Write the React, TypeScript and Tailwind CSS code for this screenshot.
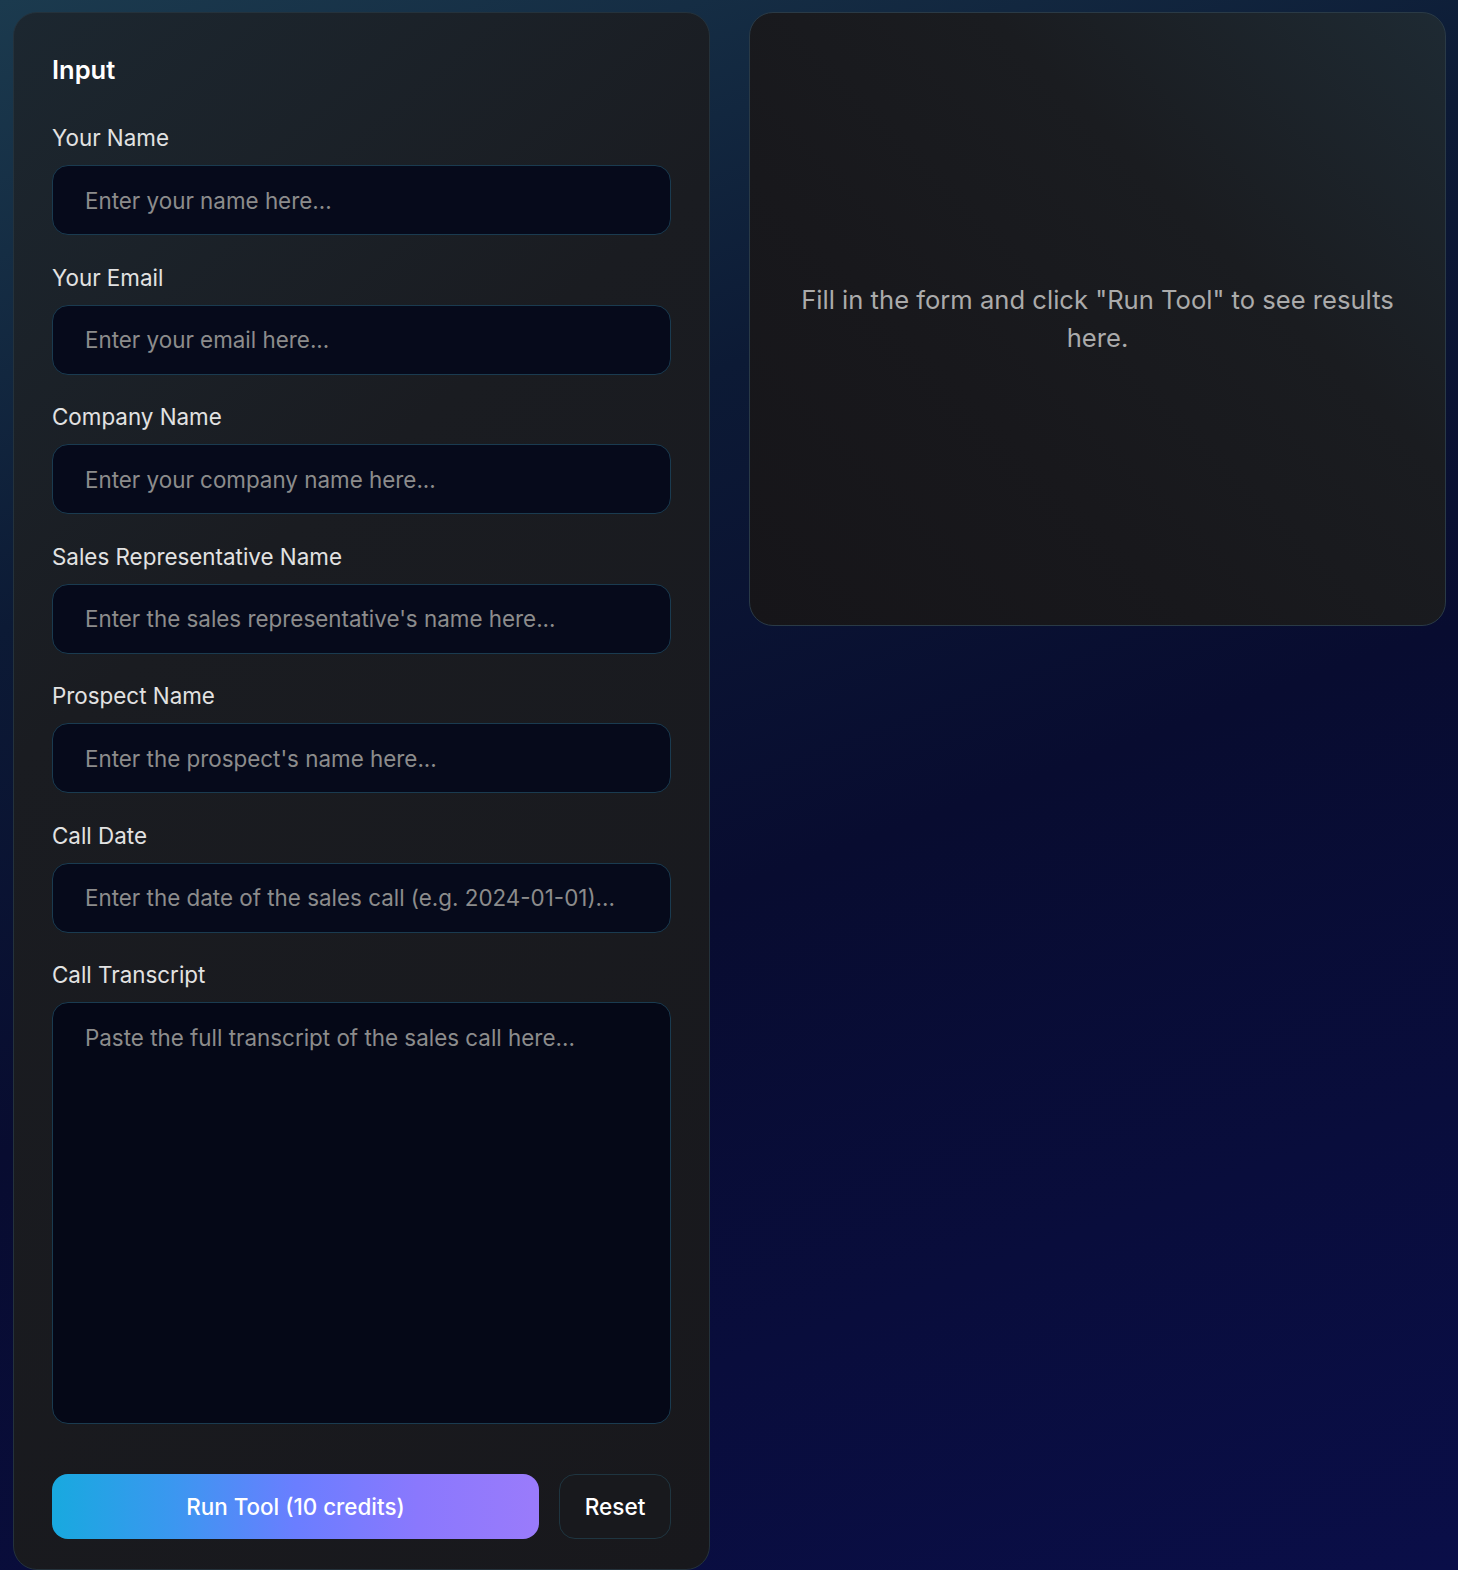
import React from "react";

const fields = [
  { label: "Your Name", ph: "Enter your name here..." },
  { label: "Your Email", ph: "Enter your email here..." },
  { label: "Company Name", ph: "Enter your company name here..." },
  { label: "Sales Representative Name", ph: "Enter the sales representative's name here..." },
  { label: "Prospect Name", ph: "Enter the prospect's name here..." },
  { label: "Call Date", ph: "Enter the date of the sales call (e.g. 2024-01-01)..." },
];

export default function App() {
  return (
    <div
      className="min-h-[1570px] w-full bg-[linear-gradient(160deg,#1b3a4e_0%,#0c1a35_30%,#080c30_55%,#0a0e48_100%)] pl-[13px] pr-[12px] pt-[12px] text-[#e5e5e5]"
      style={{ fontFamily: "Inter, 'Noto Sans', sans-serif" }}
    >
      <div className="grid grid-cols-2 items-start gap-[39px]">
        <div className="rounded-[24px] border border-[#24323c] bg-[linear-gradient(140deg,#1c2730_0%,#1a1c21_35%,#18181c_100%)] px-[38px] pb-[30px] pt-[38px]">
          <h2 className="text-[25.5px] font-semibold leading-[38px] text-white">Input</h2>
          <div className="mt-[33px] flex flex-col gap-[26.5px]">
            {fields.map((f) => (
              <div key={f.label} className="flex flex-col gap-[11px]">
                <label className="text-[22.4px] font-normal leading-[32px] text-[#e2e2e2]">{f.label}</label>
                <input
                  placeholder={f.ph}
                  className="h-[70px] w-full rounded-[16px] border border-[#1a3b50] bg-[#060a1b] px-[32px] text-[22.4px] text-white outline-none placeholder:text-[#8c8c8c]"
                />
              </div>
            ))}
            <div className="flex flex-col gap-[11px]">
              <label className="text-[22.4px] font-normal leading-[32px] text-[#e2e2e2]">Call Transcript</label>
              <textarea
                placeholder="Paste the full transcript of the sales call here..."
                className="h-[422px] w-full resize-none rounded-[16px] border border-[#1a3b50] bg-[#050817] px-[32px] py-[19px] text-[22.4px] leading-[32px] text-white outline-none placeholder:text-[#8c8c8c]"
              />
            </div>
          </div>
          <div className="mt-[50px] flex gap-[20px]">
            <button className="h-[65px] flex-1 rounded-[16px] bg-[linear-gradient(90deg,#18a9df_0%,#3b97f0_25%,#6a7eff_50%,#8a78fd_75%,#9a7bfb_100%)] text-[22.4px] font-medium text-white">
              Run Tool (10 credits)
            </button>
            <button className="h-[65px] w-[112px] rounded-[16px] border border-[#1f3540] bg-[#18191d] text-[22.6px] font-medium text-white">
              Reset
            </button>
          </div>
        </div>
        <div className="flex h-[614px] items-center justify-center rounded-[24px] border border-[#2a3a46] bg-[linear-gradient(225deg,#1e2a33_0%,#1a1c20_35%,#18181c_65%,#161519_100%)] px-[40px]">
          <p className="text-center text-[25.6px] leading-[38px] text-[#ababab]">
            Fill in the form and click "Run Tool" to see results here.
          </p>
        </div>
      </div>
    </div>
  );
}
